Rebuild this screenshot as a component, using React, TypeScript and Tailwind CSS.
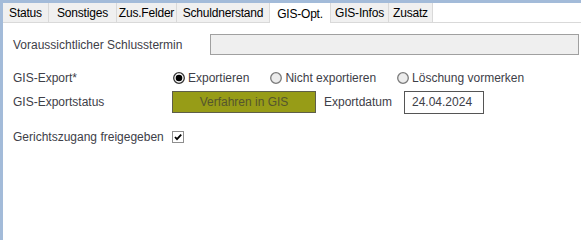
const TABS: { label: string; w: string }[] = [
  { label: "Status", w: "w-[46px]" },
  { label: "Sonstiges", w: "w-[68px]" },
  { label: "Zus.Felder", w: "w-[60px]" },
  { label: "Schuldnerstand", w: "w-[93px]" },
  { label: "GIS-Opt.", w: "w-[61px]" },
  { label: "GIS-Infos", w: "w-[58px]" },
  { label: "Zusatz", w: "w-[44px]" },
];
const ACTIVE = "GIS-Opt.";

function Radio({ checked, label }: { checked?: boolean; label: string }) {
  return (
    <label className="flex items-center gap-[3px]">
      <svg width="12" height="12" viewBox="0 0 12 12" className="shrink-0">
        <circle cx="6" cy="6" r="5.3" fill={checked ? "#ffffff" : "#ececec"} stroke={checked ? "#333333" : "#7a7a7a"} strokeWidth="1.3" />
        {checked && <circle cx="6" cy="6" r="3.3" fill="#000000" />}
      </svg>
      <span>{label}</span>
    </label>
  );
}

function Checkbox() {
  return (
    <svg width="12" height="12" viewBox="0 0 12 12" className="shrink-0">
      <rect x="0.5" y="0.5" width="11" height="11" fill="#ffffff" stroke="#8e8e8e" />
      <path d="M3 6 L5 8.2 L9.2 3.6" fill="none" stroke="#000000" strokeWidth="1.8" />
    </svg>
  );
}

export default function App() {
  return (
    <div className="flex h-screen w-full flex-col bg-white text-[12px] leading-[14px] text-[#3e4048]" style={{ fontFamily: "Tahoma, 'Liberation Sans', Arial, sans-serif" }}>
      <div className="h-[3px] shrink-0 bg-[#a3bbd9]" />
      <div className="flex flex-1 min-h-0">
        <div className="w-[3px] shrink-0 bg-[#a3bbd9]" />
        <div className="flex flex-1 flex-col">
          {/* tab strip */}
          <div className="flex h-[20px] shrink-0 border-b border-[#d9d9d9]">
            {TABS.map((t) => (
              <div
                key={t.label}
                className={`flex items-center justify-center whitespace-nowrap border-r border-[#d9d9d9] pt-[1px] tracking-[-0.2px] text-black ${t.w} ${
                  t.label === ACTIVE ? "-mb-px bg-white" : "bg-[#f0f0f0]"
                }`}
              >
                {t.label}
              </div>
            ))}
          </div>

          <div className="flex flex-col pl-[10px] pr-[2px]">
            <div className="mt-[11px] flex h-[21px] items-center">
              <span className="w-[197px] shrink-0">Voraussichtlicher Schlusstermin</span>
              <div className="h-[21px] flex-1 border border-[#a0a0a0] bg-[#efefef]" />
            </div>

            <div className="mt-[12px] flex h-[22px] items-center">
              <span className="w-[160px] shrink-0">GIS-Export*</span>
              <div className="flex items-center gap-[21px]">
                <Radio checked label="Exportieren" />
                <Radio label="Nicht exportieren" />
                <Radio label="Löschung vormerken" />
              </div>
            </div>

            <div className="mt-[2px] flex h-[22px] items-center">
              <span className="w-[159px] shrink-0">GIS-Exportstatus</span>
              <div className="flex h-[22px] w-[144px] items-center justify-center border border-[#5e5e4a] bg-[#979c17] text-[#55552e]">
                Verfahren in GIS
              </div>
              <span className="ml-[8px] w-[80px] shrink-0">Exportdatum</span>
              <div className="flex h-[23px] w-[80px] items-center border border-[#555555] bg-white pl-[7px]">24.04.2024</div>
            </div>

            <div className="mt-[13px] flex h-[22px] items-center gap-[8px]">
              <span>Gerichtszugang freigegeben</span>
              <Checkbox />
            </div>
          </div>
        </div>
      </div>
    </div>
  );
}
